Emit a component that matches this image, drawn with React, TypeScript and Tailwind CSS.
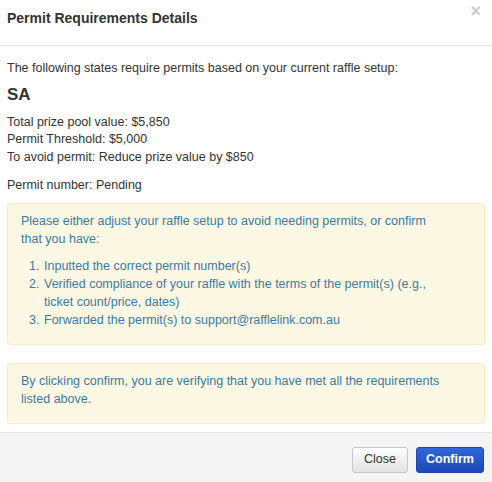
export default function App() {
  return (
    <div className="h-[482px] w-[492px] overflow-hidden bg-white font-['Liberation_Sans',Arial,sans-serif] text-[12.5px] leading-[17.5px] text-[#333]">
      <div className="relative flex h-[46px] items-center border-b border-[#e5e5e5] px-[7px]">
        <h4 className="mt-[-8px] text-[14px] font-bold text-[#333]">Permit Requirements Details</h4>
        <span className="absolute right-[11px] top-[1px] text-[18px] font-bold leading-[20px] text-[#c9c9c9]">×</span>
      </div>

      <div className="px-[7px] pt-[14px]">
        <p>The following states require permits based on your current raffle setup:</p>
        <h3 className="mt-[7px] text-[17px] font-bold leading-[19px]">SA</h3>
        <div className="mt-[10px]">
          <div>Total prize pool value: $5,850</div>
          <div>Permit Threshold: $5,000</div>
          <div>To avoid permit: Reduce prize value by $850</div>
        </div>
        <p className="mt-[11px]">Permit number: Pending</p>

        <div className="mt-[8px] rounded-[3px] border border-[#f8ecc9] bg-[#fcf8e3] pb-[15px] pl-[13px] pr-[35px] pt-[8px] leading-[18px] text-[#3a7aa8]">
          <p>Please either adjust your raffle setup to avoid needing permits, or confirm that you have:</p>
          <ol className="mt-[9px] list-decimal pl-[22px]">
            <li className="pl-[1px]">Inputted the correct permit number(s)</li>
            <li className="pl-[1px]">Verified compliance of your raffle with the terms of the permit(s) (e.g., ticket count/price, dates)</li>
            <li className="pl-[1px]">Forwarded the permit(s) to support@rafflelink.com.au</li>
          </ol>
        </div>

        <div className="mt-[18px] rounded-[3px] border border-[#f8ecc9] bg-[#fcf8e3] pb-[15px] pl-[13px] pr-[35px] pt-[8px] leading-[18px] text-[#3a7aa8]">
          <p>By clicking confirm, you are verifying that you have met all the requirements listed above.</p>
        </div>
      </div>

      <div className="mt-[8px] flex h-[60px] justify-end gap-[8px] border-t border-[#e5e5e5] bg-[#f4f4f4] pr-[8px] pt-[14px]">
        <button className="h-[26px] w-[56px] rounded-[3px] border border-[#c8c8c8] bg-gradient-to-b from-white to-[#e2e2e2] text-[12.5px] text-[#333]">
          Close
        </button>
        <button className="h-[26px] w-[68px] rounded-[3px] border border-[#1d45b0] bg-gradient-to-b from-[#2f66d8] to-[#1f48b8] text-[12.5px] font-bold text-white">
          Confirm
        </button>
      </div>
    </div>
  );
}
